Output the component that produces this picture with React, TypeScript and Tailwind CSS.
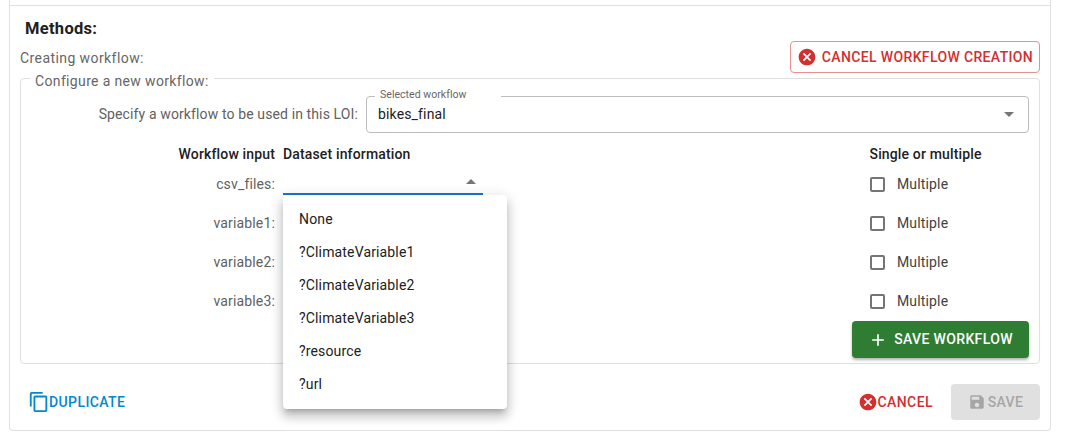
import React from "react";

function Arrow({ up = false, color = "#757575" }: { up?: boolean; color?: string }) {
  return (
    <svg width="24" height="24" viewBox="0 0 24 24" fill={color}>
      <path d={up ? "m7 14 5-5 5 5z" : "M7 10l5 5 5-5z"} />
    </svg>
  );
}

function CancelIcon({ size = 20 }: { size?: number }) {
  return (
    <svg width={size} height={size} viewBox="0 0 24 24" fill="#d32f2f">
      <path d="M12 2C6.47 2 2 6.47 2 12s4.47 10 10 10 10-4.47 10-10S17.53 2 12 2zm5 13.59L15.59 17 12 13.41 8.41 17 7 15.59 10.59 12 7 8.41 8.41 7 12 10.59 15.59 7 17 8.41 13.41 12 17 15.59z" />
    </svg>
  );
}

function Row({ label, first = false }: { label: string; first?: boolean }) {
  return (
    <div className="flex h-[39px] items-start">
      <div className="w-[254px] pt-[4px] text-right text-[14px] leading-[20px] tracking-[0.15px] text-[#616161]">{label}</div>
      <div className="ml-[8px] w-[200px]">
        {first && (
          <div className="flex h-[25px] items-center justify-end border-b-2 border-[#1976d2]">
            <Arrow up />
          </div>
        )}
      </div>
      <div className="ml-[387px] flex items-center pt-[4px]">
        <span className="box-border h-[15px] w-[15px] rounded-[2px] border-2 border-[#757575]" />
        <span className="ml-[12px] text-[14px] leading-[20px] tracking-[0.15px] text-[#424242]">Multiple</span>
      </div>
    </div>
  );
}

export default function App() {
  const items = ["None", "?ClimateVariable1", "?ClimateVariable2", "?ClimateVariable3", "?resource", "?url"];
  return (
    <div className="relative h-[441px] w-[1069px] overflow-hidden bg-white font-['Roboto',sans-serif]">
      <div className="ml-[9px] box-border h-[431px] w-[1042px] rounded-b-[4px] border-x border-b border-[#e0e0e0]">
        <div className="h-[6px] border-b border-[#e0e0e0]" />
        <div className="pl-[15px] pt-[13px] text-[16.5px] font-bold leading-[20px] tracking-[0.3px] text-[#212121]">Methods:</div>
        <div className="flex items-start justify-between pl-[10px] pr-[10px] pt-[2px]">
          <span className="pt-[7px] text-[14px] leading-[20px] tracking-[0.42px] text-[#666666]">Creating workflow:</span>
          <button className="flex h-[32px] w-[250px] items-center justify-center rounded-[4px] border border-[#e88f8f] text-[14px] font-medium tracking-[0.36px] text-[#d32f2f]">
            <span className="mr-[5px] flex"><CancelIcon /></span>
            CANCEL WORKFLOW CREATION
          </button>
        </div>
        <fieldset className="mx-[10px] -mt-[7px] box-border h-[298px] min-w-0 rounded-[4px] border border-[#e0e0e0] px-[10px]">
          <legend className="ml-[-1px] px-[5px] pt-[5px] text-[14px] leading-[20px] tracking-[0.35px] text-[#666666]">Configure a new workflow:</legend>
          <div className="-mt-[2px] flex items-start">
            <span className="w-[327px] pt-[15px] text-right text-[14px] leading-[20px] tracking-[0.12px] text-[#616161]">Specify a workflow to be used in this LOI:</span>
            <fieldset className="ml-[8px] box-border h-[44px] w-[663px] min-w-0 rounded-[4px] border border-[#bdbdbd] pl-[8px]">
              <legend className="pb-[4px] pl-[5px] pr-[35px] text-[10.5px] leading-[11px] tracking-[0.04px] text-[#666666]">Selected workflow</legend>
              <div className="flex h-[20px] w-full items-center justify-between pl-[3px] pr-[7px]">
                <span className="text-[14px] leading-[20px] tracking-[0.15px] text-[#212121]">bikes_final</span>
                <Arrow />
              </div>
            </fieldset>
          </div>
          <div className="mt-[11px] flex h-[21px] items-center text-[14px] font-medium tracking-[0.15px] text-[#212121]">
            <span className="w-[244px] text-right">Workflow input</span>
            <span className="ml-[8px]">Dataset information</span>
            <span className="ml-[459px]">Single or multiple</span>
          </div>
          <div className="-ml-[10px] mt-[5px]">
            <Row label="csv_files:" first />
            <Row label="variable1:" />
            <Row label="variable2:" />
            <Row label="variable3:" />
          </div>
          <div className="-mt-[5px] flex justify-end">
            <button className="flex h-[37px] w-[177px] items-center justify-center rounded-[4px] bg-[#2e7d32] text-[14px] font-medium tracking-[0.36px] text-white shadow-[0_2px_3px_rgba(0,0,0,0.3)]">
              <svg width="20" height="20" viewBox="0 0 24 24" fill="white" className="mr-[6px]"><path d="M19 13h-6v6h-2v-6H5v-2h6V5h2v6h6v2z" /></svg>
              SAVE WORKFLOW
            </button>
          </div>
        </fieldset>
        <div className="flex items-center justify-between pl-[18px] pr-[10px] pt-[20px]">
          <button className="flex items-center text-[14px] font-medium tracking-[0.4px] text-[#0288d1]">
            <svg width="22" height="22" viewBox="0 0 24 24" fill="#0288d1" className="-mr-[1px]"><path d="M16 1H4c-1.1 0-2 .9-2 2v14h2V3h12V1zm3 4H8c-1.1 0-2 .9-2 2v14c0 1.1.9 2 2 2h11c1.1 0 2-.9 2-2V7c0-1.1-.9-2-2-2zm0 16H8V7h11v14z" /></svg>
            DUPLICATE
          </button>
          <div className="flex items-center">
            <button className="flex items-center text-[14px] font-medium tracking-[0.42px] text-[#d32f2f]">
              <CancelIcon />
              CANCEL
            </button>
            <button className="ml-[18px] flex h-[36px] w-[89px] items-center justify-center rounded-[4px] bg-[#e0e0e0] text-[14px] font-medium tracking-[0.4px] text-[#a6a6a6]">
              <svg width="18" height="18" viewBox="0 0 24 24" fill="#a6a6a6" className="mr-[2px]"><path d="M17 3H5c-1.11 0-2 .9-2 2v14c0 1.1.89 2 2 2h14c1.1 0 2-.9 2-2V7l-4-4zm-5 16c-1.66 0-3-1.34-3-3s1.34-3 3-3 3 1.34 3 3-1.34 3-3 3zm3-10H5V5h10v4z" /></svg>
              SAVE
            </button>
          </div>
        </div>
      </div>
      <div className="absolute left-[283px] top-[195px] w-[224px] rounded-[4px] bg-white py-[8px] shadow-[0_5px_5px_-3px_rgba(0,0,0,0.2),0_8px_10px_1px_rgba(0,0,0,0.14),0_3px_14px_2px_rgba(0,0,0,0.12)]">
        {items.map((t) => (
          <div key={t} className="flex h-[33px] items-center pl-[16px] text-[14px] tracking-[0.15px] text-[#212121]">{t}</div>
        ))}
      </div>
    </div>
  );
}
